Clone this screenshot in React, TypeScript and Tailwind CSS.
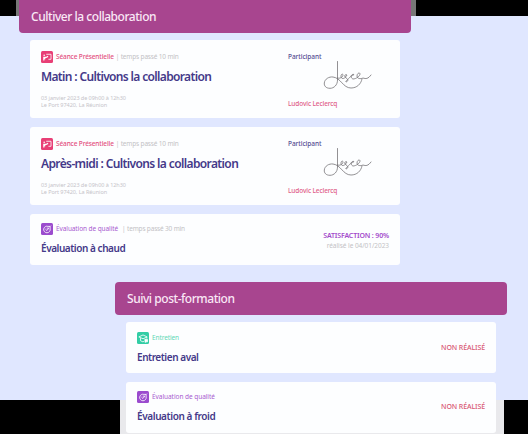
import type { ReactNode } from "react";

const Signature = () => (
  <svg className="ml-[35px] -mt-[1px] h-[30px] w-[50px]" viewBox="0 0 50 30" fill="none" stroke="#6f6c70" strokeWidth="0.75" strokeLinecap="round" strokeLinejoin="round">
    <path d="M14.5 .5V19C14.5 24 11 27.3 7 27.3C3 27.3 1 25 1.3 22C1.7 18 6 15.5 10 16C18 17 20 27 28 27C34 27 38 23 39 18" />
    <path d="M14.5 17C17 18 20 16 20 14C20 12.5 18 13 18 15C18 19 22 18 24 14C23 13 21 14 22 16C25 18 26 20 23 21C22 20 26 18 28 15C29 13 31 13 31 14C29 13 27 17 30 18C33 18 37 15 37 13C37 11 34 12 34 15C34 18 38 18 40 17C43 18 45 18 48 14" />
  </svg>
);

const icons = {
  session: (
    <>
      <path d="M4.8 3H9.2V7.6H6.8" />
      <circle cx="2.9" cy="3.9" r=".75" fill="white" stroke="none" />
      <path d="M2.6 8.8V5.9H4.6L6.5 4.9M2.9 7H4" strokeWidth="1.1" />
    </>
  ),
  quality: (
    <>
      <path d="M8.4 5.4A3 3 0 1 1 6.4 3.1H8.3L8.4 5.4" />
      <path d="M4 5.5L5.4 6.9L7.2 4.7H5.2" />
      <path d="M8.1 3.4L9.1 2.4" />
    </>
  ),
  interview: (
    <>
      <path d="M1.7 4.5L5.5 2.7L9.3 4.5L5.5 6.2Z" />
      <path d="M3.2 5.6V8L5.4 9L6.4 8.6M9 4.8V6" />
      <path d="M7.2 6.8H9.6V9H8.3L7.4 9.5Z" fill="white" />
    </>
  ),
};

const tones = {
  session: "bg-[#e83f76]",
  quality: "bg-[#9b4bce]",
  interview: "bg-[#32cda5]",
};

const Icon = ({ kind }: { kind: keyof typeof icons }) => (
  <span className={`-mr-px h-[12px] w-[12px] shrink-0 rounded-[1.5px] ${tones[kind]}`}>
    <svg className="h-[12px] w-[12px]" viewBox="0 0 11 11" fill="none" stroke="white" strokeWidth="0.75">
      {icons[kind]}
    </svg>
  </span>
);

const Card = ({ children, className }: { children: ReactNode; className: string }) => (
  <article className={`flex justify-between rounded-[3px] bg-[#fdfeff] px-[11px] ${className}`}>{children}</article>
);

const Session = ({ title, tracking }: { title: string; tracking: string }) => (
  <Card className="h-[78px] pt-[11px]">
    <div>
      <div className="flex h-[12px] items-center whitespace-nowrap text-[6.5px]">
        <Icon kind="session" />
        <span className="ml-[4px] font-medium tracking-[-0.13px] text-[#e34f80]">Séance Présentielle</span>
        <span className="ml-[2px] tracking-[-0.17px] text-[#c3c2c5]">| temps passé 10 min</span>
      </div>
      <h2 className={`mt-[6px] whitespace-nowrap text-[12px] leading-[16px] font-semibold text-[#443989] ${tracking}`}>{title}</h2>
      <div className="mt-[10px] text-[5.5px] leading-[7px] whitespace-nowrap text-[#c5c3c9]">
        <p className="tracking-[-0.05px]">03 janvier 2023 de 09h00 à 12h30</p>
        <p className="tracking-[-0.05px]">Le Port 97420, La Réunion</p>
      </div>
    </div>
    <div className="w-[101px] pt-px whitespace-nowrap text-[6.5px] leading-[10px]">
      <p className="font-medium tracking-[-0.05px] text-[#554b92]">Participant</p>
      <Signature />
      <p className="mt-[8px] font-medium tracking-[-0.12px] text-[#df5d88]">Ludovic Leclercq</p>
    </div>
  </Card>
);

export default function App() {
  return (
    <main className="h-[434px] w-[528px] overflow-hidden bg-[linear-gradient(#000_16px,#e0e7ff_16px,#e0e7ff_400px,#000_400px)] font-['Noto_Sans',sans-serif]">
      <section className="ml-[16px] h-[282px] w-[400px] bg-[linear-gradient(#777_16px,transparent_16px)] pr-[5px] pl-[3px]">
        <h1 className="h-[33px] rounded-b-[4px] bg-[#a8458f] pt-[8px] pl-[12px] text-[12px] leading-[17px] font-medium tracking-[-0.46px] text-[#fae8f6]">Cultiver la collaboration</h1>
        <div className="mt-[7px] mr-[11px] ml-[11px] flex flex-col gap-[9px]">
          <Session title="Matin : Cultivons la collaboration" tracking="tracking-[-0.65px]" />
          <Session title="Après-midi : Cultivons la collaboration" tracking="tracking-[-0.62px]" />
          <Card className="h-[51px] pt-[9px]">
            <div>
              <div className="flex h-[12px] items-center whitespace-nowrap text-[6.5px]">
                <Icon kind="quality" />
                <span className="ml-[4px] tracking-[-0.09px] text-[#a85bd0]">Évaluation de qualité</span>
                <span className="ml-[4px] tracking-[-0.17px] text-[#c3c2c5]">| temps passé 30 min</span>
              </div>
              <h2 className="mt-[5px] text-[10px] leading-[16px] font-semibold tracking-[-0.45px] text-[#443989]">Évaluation à chaud</h2>
            </div>
            <div className="pt-[8px] text-right whitespace-nowrap">
              <p className="text-[7px] leading-[10px] font-semibold tracking-[-0.15px] text-[#a34acb]">SATISFACTION : 90%</p>
              <p className="text-[6.5px] leading-[9px] tracking-[-0.05px] text-[#c3c2c5]">réalisé le 04/01/2023</p>
            </div>
          </Card>
        </div>
      </section>

      <section className="ml-[120px] h-[152px] w-[384px] bg-[linear-gradient(transparent_118px,#e9e9ec_118px)]">
        <h1 className="-mr-[3px] -ml-[5px] h-[33px] rounded-[4px] bg-[#a8458f] pt-[8px] pl-[12px] text-[12px] leading-[17px] font-medium tracking-[-0.46px] text-[#fae8f6]">Suivi post-formation</h1>
        <div className="mt-[7px] mr-[8px] ml-[6px] flex flex-col gap-[9px]">
          <Card className="h-[51px] pt-[10px]">
            <div>
              <div className="flex h-[12px] items-center text-[6.5px]">
                <Icon kind="interview" />
                <span className="ml-[4px] tracking-[-0.1px] text-[#63d8b6]">Entretien</span>
              </div>
              <h2 className="mt-[5px] text-[10px] leading-[16px] font-semibold tracking-[-0.45px] text-[#443989]">Entretien aval</h2>
            </div>
            <p className="pt-[11px] text-[7px] leading-[10px] font-medium tracking-[-0.1px] text-[#d95874]">NON RÉALISÉ</p>
          </Card>
          <Card className="h-[51px] pt-[9px]">
            <div>
              <div className="flex h-[12px] items-center text-[6.5px]">
                <Icon kind="quality" />
                <span className="ml-[4px] tracking-[-0.05px] text-[#a85bd0]">Évaluation de qualité</span>
              </div>
              <h2 className="mt-[5px] text-[10px] leading-[16px] font-semibold tracking-[-0.4px] text-[#443989]">Évaluation à froid</h2>
            </div>
            <p className="pt-[11px] text-[7px] leading-[10px] font-medium tracking-[-0.1px] text-[#d95874]">NON RÉALISÉ</p>
          </Card>
        </div>
      </section>
    </main>
  );
}
